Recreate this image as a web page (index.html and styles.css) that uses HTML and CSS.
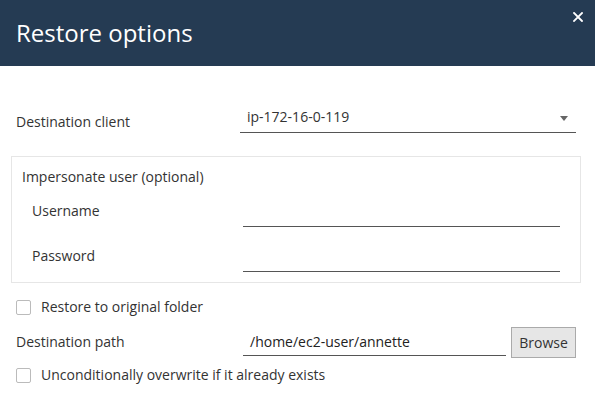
FILE: index.html
```html
<!DOCTYPE html>
<html>
<head>
<meta charset="utf-8">
<link rel="stylesheet" href="styles.css">
</head>
<body>
<div class="dialog">
  <div class="header">
    <div class="title">Restore options</div>
    <div class="close"><svg width="10" height="10" viewBox="0 0 10 10"><path d="M1 1L9 9M9 1L1 9" stroke="#fff" stroke-width="1.8" stroke-linecap="square"/></svg></div>
  </div>
  <div class="body">
    <div class="row client-row">
      <div class="label client-label">Destination client</div>
      <div class="select"><span class="select-text">ip-172-16-0-119</span><span class="caret"></span></div>
    </div>
    <div class="group">
      <div class="legend">Impersonate user (optional)</div>
      <div class="field">
        <div class="label field-label">Username</div>
        <div class="line-input"></div>
      </div>
      <div class="field">
        <div class="label field-label">Password</div>
        <div class="line-input"></div>
      </div>
    </div>
    <div class="check-row first-check">
      <span class="box"></span><span class="label">Restore to original folder</span>
    </div>
    <div class="row path-row">
      <div class="label path-label">Destination path</div>
      <div class="path-input">/home/ec2-user/annette</div>
      <div class="button">Browse</div>
    </div>
    <div class="check-row second-check">
      <span class="box"></span><span class="label">Unconditionally overwrite if it already exists</span>
    </div>
  </div>
</div>
</body>
</html>
```
FILE: styles.css
```css
html, body {
  margin: 0;
  padding: 0;
  background: #fff;
}
body {
  font-family: "Open Sans", "Noto Sans", sans-serif;
  font-size: 14px;
  line-height: 20px;
  color: #333;
}
.dialog {
  width: 595px;
  height: 402px;
  overflow: hidden;
}
.header {
  height: 66px;
  background: #253b53;
  display: flex;
  justify-content: space-between;
  padding-left: 16px;
}
.title {
  font-size: 24px;
  line-height: 66px;
  color: #fff;
}
.close {
  margin-top: 12px;
  margin-right: 12px;
  width: 10px;
  height: 10px;
  line-height: 0;
}
.body {
  padding: 0 14px 0 11px;
}
.row {
  display: flex;
  margin: 0 5px;
}
.client-row {
  margin-top: 35px;
}
.client-label {
  width: 224px;
  padding-top: 11px;
}
.select {
  flex: 1;
  display: flex;
  justify-content: space-between;
  align-items: flex-start;
  padding: 6px 8px 5px 7px;
  border-bottom: 1px solid #555;
}
.caret {
  width: 0;
  height: 0;
  margin-top: 9px;
  border-left: 4px solid transparent;
  border-right: 4px solid transparent;
  border-top: 5px solid #666;
}
.group {
  margin-top: 23px;
  border: 1px solid #e6e6e6;
  padding: 10px 20px 10px 10px;
}
.legend {
  margin-bottom: 14px;
}
.field {
  display: flex;
}
.field + .field {
  margin-top: 19px;
}
.field-label {
  width: 211px;
  padding-left: 10px;
}
.line-input {
  flex: 1;
  height: 25px;
  border-bottom: 1px solid #555;
}
.check-row {
  display: flex;
  align-items: center;
  margin: 0 5px;
  height: 20px;
}
.first-check {
  margin-top: 14px;
}
.second-check {
  margin-top: 7px;
}
.box {
  width: 13px;
  height: 13px;
  border: 1px solid #bbb;
  border-radius: 2px;
  background: #fff;
  margin-right: 10px;
}
.path-row {
  margin-top: 10px;
  height: 31px;
  align-items: flex-start;
}
.path-label {
  width: 227px;
  padding-top: 5px;
}
.path-input {
  width: 256px;
  padding: 5px 0 3px 7px;
  border-bottom: 1px solid #555;
  color: #222;
}
.button {
  margin-left: 5px;
  width: 63px;
  height: 29px;
  border: 1px solid #aaa;
  background: #e6e6e6;
  text-align: center;
  line-height: 29px;
  color: #333;
}
```
